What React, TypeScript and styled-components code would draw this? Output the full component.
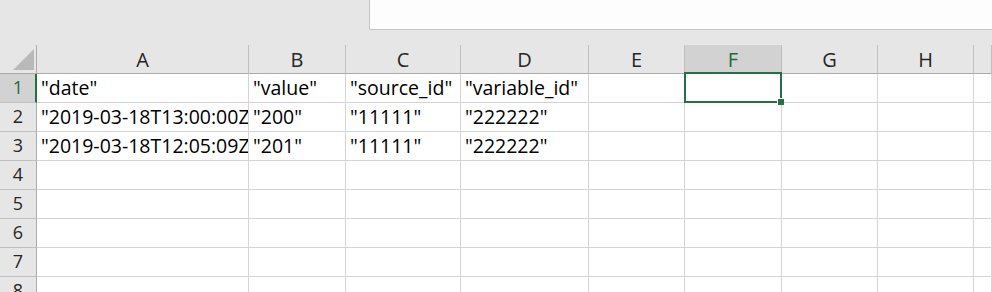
import React from "react";
import styled, { createGlobalStyle } from "styled-components";

const GlobalStyle = createGlobalStyle`
  body {
    margin: 0;
    background: #ffffff;
    font-family: "Open Sans", "Noto Sans", sans-serif;
  }
`;

const columns = ["A", "B", "C", "D", "E", "F", "G", "H", ""];
const widths = [212, 97, 115, 128, 96, 97, 96, 96];

const rows: string[][] = [
  ['"date"', '"value"', '"source_id"', '"variable_id"'],
  ['"2019-03-18T13:00:00Z"', '"200"', '"11111"', '"222222"'],
  ['"2019-03-18T12:05:09Z"', '"201"', '"11111"', '"222222"'],
  [],
  [],
  [],
  [],
  [],
];

const activeCol = 5;
const activeRow = 0;

const Page = styled.div`
  width: 992px;
  height: 292px;
  overflow: hidden;
  background: #e6e6e6;
`;

const TopBar = styled.div`
  display: flex;
  height: 45px;
  background: #e6e6e6;
`;

const NameArea = styled.div`
  flex: 0 0 369px;
`;

const FormulaBox = styled.div`
  flex: 1;
  height: 30px;
  box-sizing: border-box;
  background: #fdfdfd;
  border-left: 1px solid #c6c6c6;
  border-bottom: 1px solid #c6c6c6;
`;

const Sheet = styled.div`
  display: grid;
  grid-template-columns: 37px ${widths.map((w) => `${w}px`).join(" ")} 1fr;
  grid-template-rows: 29px;
  grid-auto-rows: 29px;
  background: #ffffff;
`;

const Corner = styled.div`
  position: relative;
  box-sizing: border-box;
  background: #e6e6e6;
  border-right: 1px solid #ababab;
  border-bottom: 1px solid #ababab;

  &::after {
    content: "";
    position: absolute;
    left: 13px;
    top: 4px;
    width: 21px;
    height: 21px;
    background: #b9b9b9;
    clip-path: polygon(100% 0, 100% 100%, 0 100%);
  }
`;

const ColHeader = styled.div<{ $selected?: boolean }>`
  box-sizing: border-box;
  background: ${(p) => (p.$selected ? "#d2d2d2" : "#e6e6e6")};
  border-right: 1px solid #c0c0c0;
  border-bottom: 1px solid ${(p) => (p.$selected ? "#217346" : "#ababab")};
  color: ${(p) => (p.$selected ? "#1d6b3f" : "#262626")};
  font-size: 20px;
  line-height: 28px;
  padding-top: 1px;
  text-align: center;
`;

const RowHeader = styled.div<{ $selected?: boolean }>`
  box-sizing: border-box;
  background: ${(p) => (p.$selected ? "#d2d2d2" : "#e6e6e6")};
  border-bottom: 1px solid #c0c0c0;
  border-right: ${(p) => (p.$selected ? "2px solid #217346" : "1px solid #ababab")};
  color: ${(p) => (p.$selected ? "#1d6b3f" : "#262626")};
  font-size: 18px;
  line-height: 27px;
  padding-left: ${(p) => (p.$selected ? "1px" : "0")};
  text-align: center;
`;

const Cell = styled.div<{ $active?: boolean }>`
  position: relative;
  box-sizing: border-box;
  min-width: 0;
  border-right: 1px solid #d4d4d4;
  border-bottom: 1px solid #d4d4d4;
  padding-left: 4px;
  font-size: 19.5px;
  line-height: 27px;
  color: #000000;
  white-space: nowrap;
  overflow: ${(p) => (p.$active ? "visible" : "hidden")};

  ${(p) =>
    p.$active &&
    `
    &::after {
      content: "";
      position: absolute;
      left: -1px;
      top: -2px;
      right: -1px;
      bottom: -1px;
      border: 2px solid #217346;
    }
    &::before {
      content: "";
      position: absolute;
      right: -3px;
      bottom: -3px;
      width: 6px;
      height: 6px;
      background: #217346;
      border: 1px solid #ffffff;
      border-width: 1px 0 0 1px;
      z-index: 1;
    }
  `}
`;

const App: React.FC = () => (
  <>
    <GlobalStyle />
    <Page>
      <TopBar>
        <NameArea />
        <FormulaBox />
      </TopBar>
      <Sheet>
        <Corner />
        {columns.map((c, i) => (
          <ColHeader key={`h${i}`} $selected={i === activeCol}>
            {c}
          </ColHeader>
        ))}
        {rows.map((row, r) => (
          <React.Fragment key={r}>
            <RowHeader $selected={r === activeRow}>{r + 1}</RowHeader>
            {columns.map((_, c) => (
              <Cell key={c} $active={r === activeRow && c === activeCol}>
                {row[c] ?? ""}
              </Cell>
            ))}
          </React.Fragment>
        ))}
      </Sheet>
    </Page>
  </>
);

export default App;
